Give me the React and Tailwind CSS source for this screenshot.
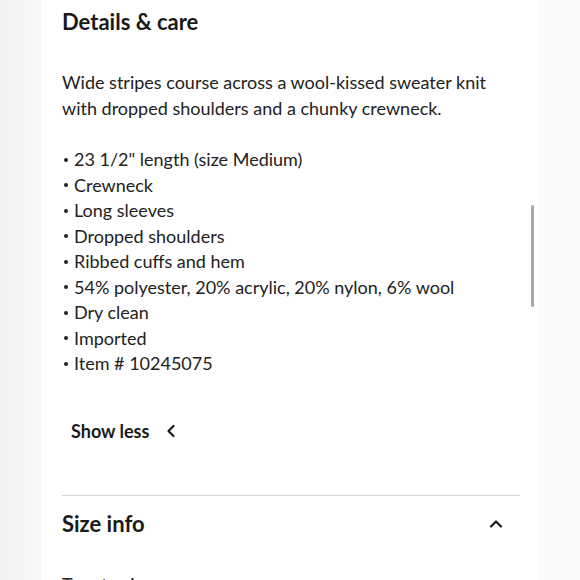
import { ChevronLeft, ChevronUp } from 'lucide-react';

const bullets = [
  '23 1/2" length (size Medium)',
  'Crewneck',
  'Long sleeves',
  'Dropped shoulders',
  'Ribbed cuffs and hem',
  '54% polyester, 20% acrylic, 20% nylon, 6% wool',
  'Dry clean',
  'Imported',
  'Item # 10245075',
];

export default function App() {
  return (
    <div className="flex h-[580px] w-[580px] overflow-hidden bg-[#fafafa] font-['Lato',sans-serif] text-[#1a1a1a]">
      <div className="w-[41px] shrink-0 bg-gradient-to-r from-[#f2f2f2] to-[#f8f8f8]" />
      <div className="relative w-[497px] shrink-0 bg-white pl-[21px] pr-[18px]">
        <h2 className="mt-[8px] text-[22px] font-bold leading-[28px]">Details &amp; care</h2>

        <p className="mt-[34px] text-[18px] leading-[25.5px] text-[#222]">
          Wide stripes course across a wool-kissed sweater knit with dropped shoulders and a chunky crewneck.
        </p>

        <ul className="mt-[26px] text-[18px] leading-[25.5px] text-[#222]">
          {bullets.map((b) => (
            <li key={b} className="flex items-center">
              <span className="ml-[2px] mr-[6px] h-[4px] w-[4px] rounded-full bg-[#222]" />
              {b}
            </li>
          ))}
        </ul>

        <button className="mt-[41px] ml-[9px] flex items-center gap-[12px] text-[18px] font-bold leading-[26px]">
          Show less
          <ChevronLeft className="h-[20px] w-[20px]" strokeWidth={2.6} />
        </button>

        <div className="mt-[51px] h-px bg-[#d5d5d5]" />

        <div className="mt-[13px] flex items-center justify-between pr-[14px]">
          <h2 className="text-[22px] font-bold leading-[30px]">Size info</h2>
          <ChevronUp className="h-[20px] w-[20px]" strokeWidth={2.6} />
        </div>

        <p className="mt-[33px] text-[18px] leading-[25px] text-[#222]">True to size</p>

        <div className="absolute left-[490px] top-[205px] h-[102px] w-[3px] rounded-full bg-[#a8a8a8]" />
      </div>
    </div>
  );
}
